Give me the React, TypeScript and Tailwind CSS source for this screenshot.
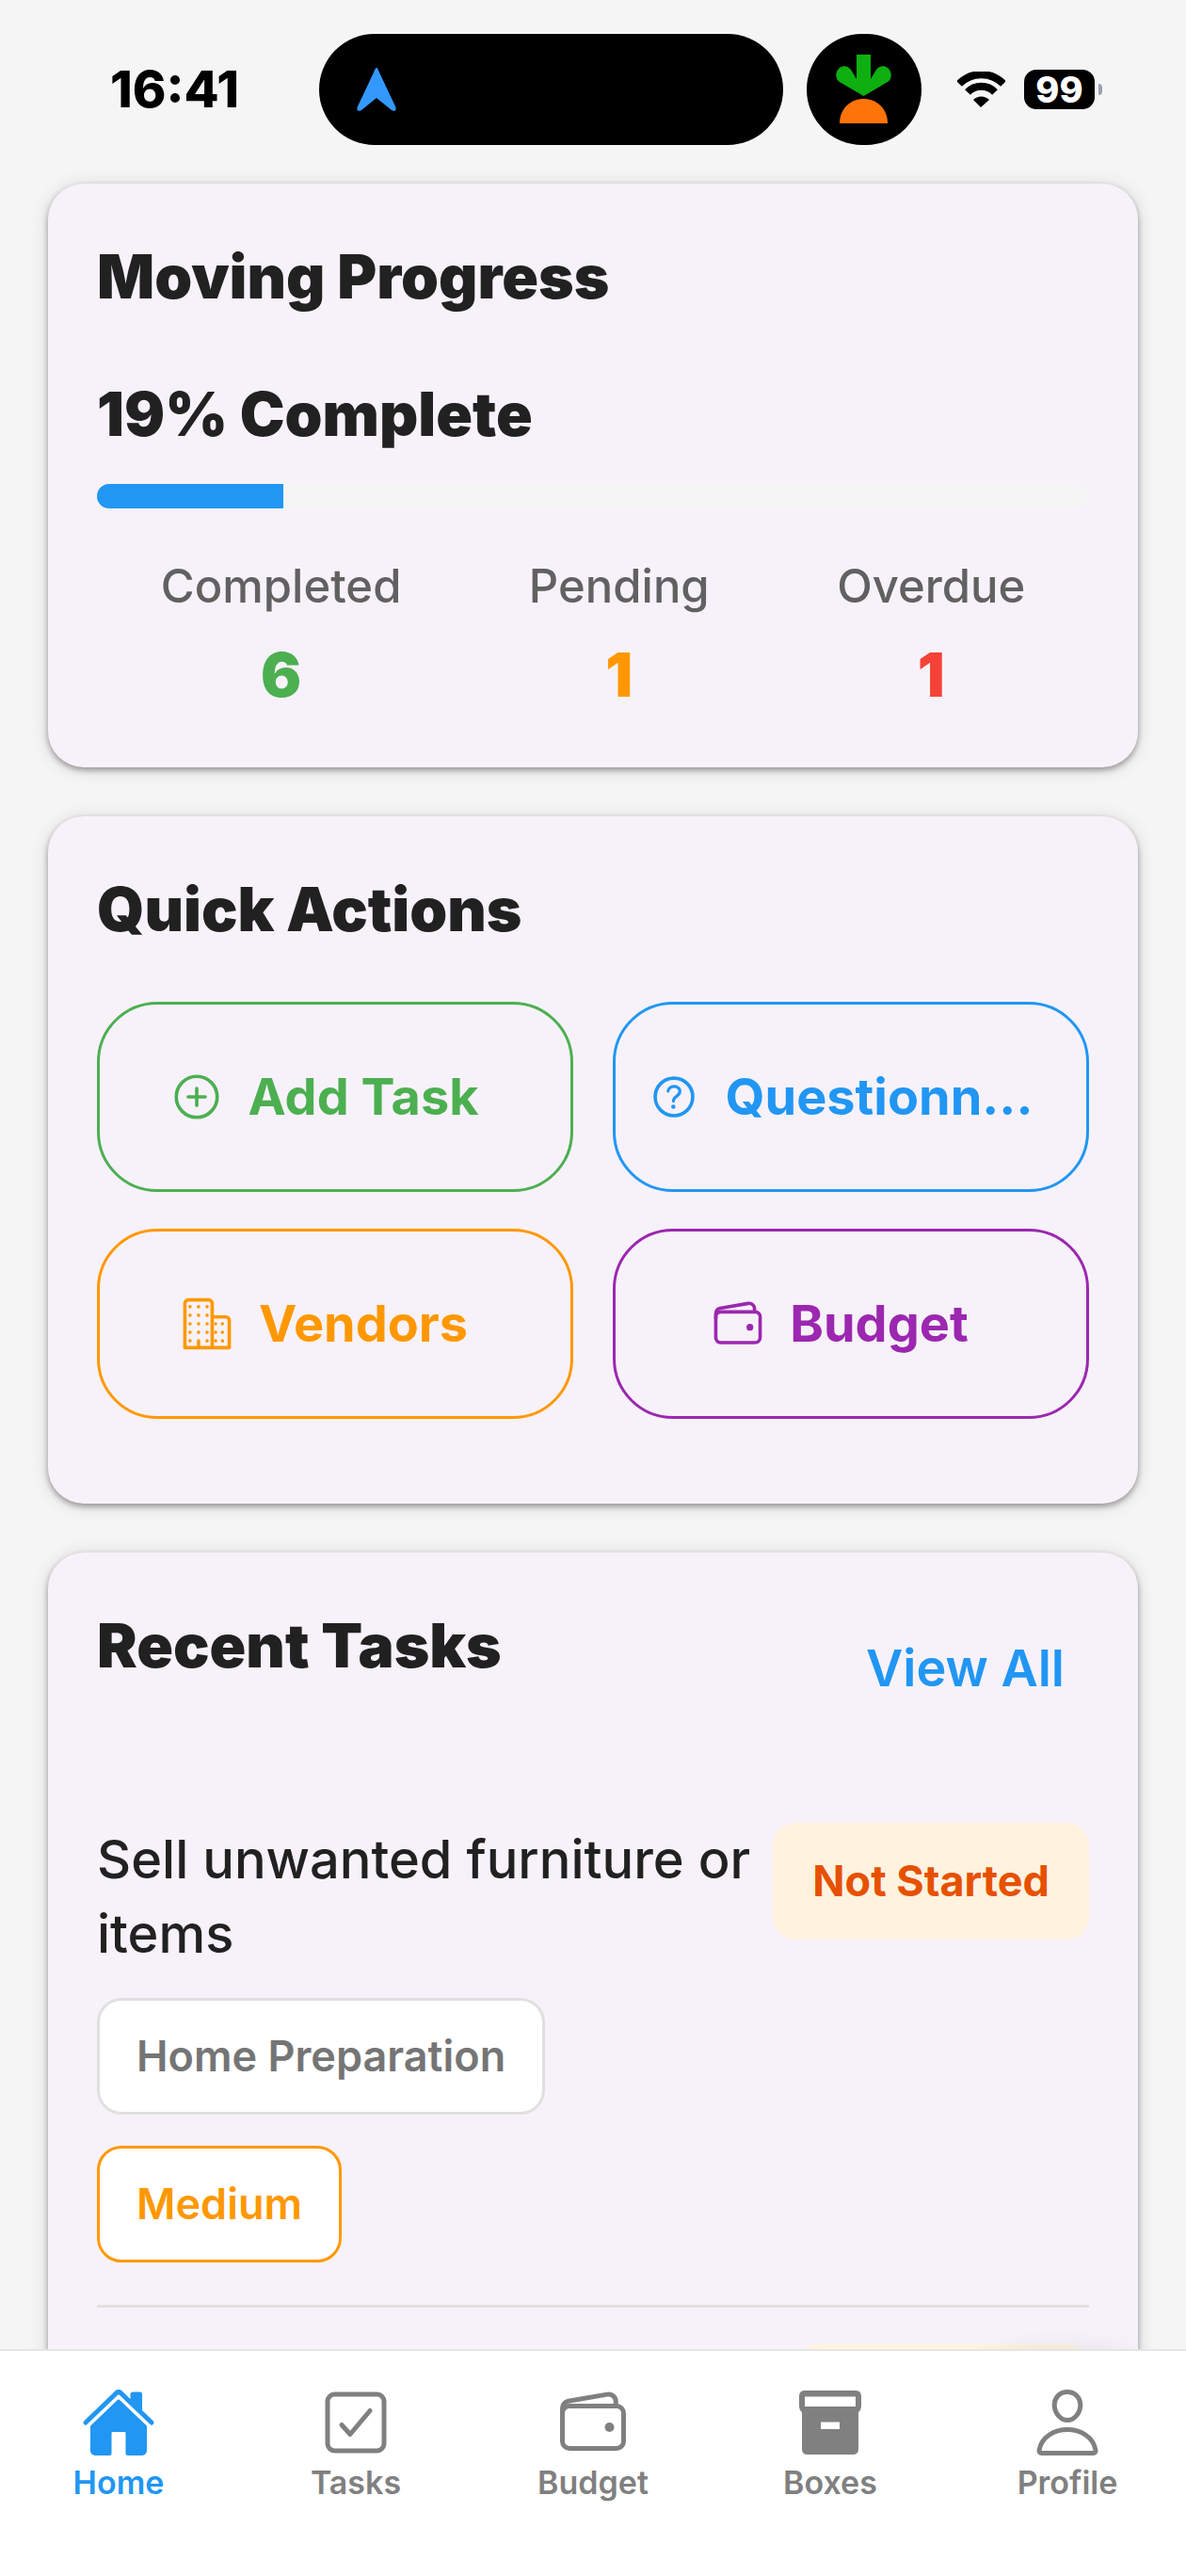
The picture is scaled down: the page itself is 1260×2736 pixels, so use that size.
import React from 'react';
import {
  IoAddCircleOutline,
  IoBusinessOutline,
  IoCheckboxOutline,
  IoHelpCircleOutline,
  IoHome,
  IoPersonOutline,
  IoWalletOutline,
} from 'react-icons/io5';

interface QuickAction {
  label: string;
  icon: React.ReactNode;
  className: string;
}

interface TabItem {
  label: string;
  icon: React.ReactNode;
  active?: boolean;
}

const BoxIcon: React.FC = () => (
  <svg viewBox="0 0 80 80" className="size-20" fill="currentColor">
    <path
      fillRule="evenodd"
      d="M13 6H67Q73 6 73 12V22Q73 27 70 29V68Q70 74 64 74H16Q10 74 10 68V29Q7 27 7 22V12Q7 6 13 6ZM13 12.5V23H67V12.5ZM30 39.5V47H50V39.5Z"
    />
  </svg>
);

const stats = [
  { label: 'Completed', value: 6, className: 'text-[#4caf50]' },
  { label: 'Pending', value: 1, className: 'text-[#ff9800]' },
  { label: 'Overdue', value: 1, className: 'text-[#f44336]' },
];

const quickActions: QuickAction[] = [
  {
    label: 'Add Task',
    icon: <IoAddCircleOutline className="size-[58px] shrink-0" />,
    className: 'border-[#4caf50] text-[#4caf50]',
  },
  {
    label: 'Questionn...',
    icon: <IoHelpCircleOutline className="size-[58px] shrink-0" />,
    className: 'border-[#2196f3] text-[#2196f3]',
  },
  {
    label: 'Vendors',
    icon: <IoBusinessOutline className="size-[58px] shrink-0" />,
    className: 'border-[#ff9800] text-[#ff9800]',
  },
  {
    label: 'Budget',
    icon: <IoWalletOutline className="size-[58px] shrink-0" />,
    className: 'border-[#9c27b0] text-[#9c27b0]',
  },
];

const tabs: TabItem[] = [
  { label: 'Home', icon: <IoHome className="size-20" />, active: true },
  { label: 'Tasks', icon: <IoCheckboxOutline className="size-20" /> },
  { label: 'Budget', icon: <IoWalletOutline className="size-20" /> },
  { label: 'Boxes', icon: <BoxIcon /> },
  { label: 'Profile', icon: <IoPersonOutline className="size-20" /> },
];

const Card: React.FC<{ children: React.ReactNode; className?: string }> = ({ children, className = '' }) => (
  <section
    className={`rounded-[38px] bg-[#f7f2fa] px-[52px] shadow-[0_3px_6px_rgba(0,0,0,0.35),0_2px_20px_rgba(0,0,0,0.12)] ${className}`}
  >
    {children}
  </section>
);

const StatusBar: React.FC = () => (
  <header className="flex h-[190px] items-start pt-9">
    <div className="flex h-[118px] w-[339px] items-center pl-[117px] text-[54px] leading-[60px] font-extrabold text-black">
      16:41
    </div>
    <div className="flex h-[118px] w-[493px] items-center rounded-full bg-black pl-10">
      <svg viewBox="0 0 42 46" className="h-[46px] w-[42px]" fill="#3399ff">
        <path d="M21 0C22 0 23 2 24 5L41 41C43 45 40 47 37 45L21 32L5 45C2 47-1 45 1 41L18 5C19 2 20 0 21 0Z" />
      </svg>
    </div>
    <div className="ml-[25px] flex h-[118px] w-[122px] items-center justify-center rounded-full bg-black">
      <svg viewBox="0 0 60 74" className="h-[74px] w-[60px]">
        <path
          d="M22 0H37V26L43 16C46 12 51 11 55 14C60 18 60 26 55 29L29.500 44L4 29C-1 26-1 18 4 14C8 11 13 12 16 16L22 26Z"
          fill="#0eaf10"
        />
        <path d="M4 73C4 57 16 47 29.500 47S55 57 55 73Z" fill="#ff7409" />
      </svg>
    </div>
    <div className="flex h-[118px] items-center pl-[38px]">
      <svg viewBox="0 0 51 38" className="h-[38px] w-[51px]" fill="none" stroke="#000">
        <path d="M2 13a33 33 0 0 1 47 0" strokeWidth="8" />
        <path d="M11 22a20 20 0 0 1 29 0" strokeWidth="8" />
        <path d="M17 30a12 12 0 0 1 17 0L25 38Z" fill="#000" stroke="none" />
      </svg>
      <div className="ml-5 flex h-[42px] w-[75px] items-center justify-center rounded-[13px] bg-black text-[38px] leading-[42px] font-extrabold text-white">
        99
      </div>
      <div className="ml-1 h-3 w-1 rounded-r-full bg-gray-400" />
    </div>
  </header>
);

const App: React.FC = () => {
  return (
    <div className="relative flex h-screen flex-col overflow-hidden bg-[#f5f5f5] font-['Inter',sans-serif] text-[#212121]">
      <StatusBar />

      <main className="flex min-h-0 flex-1 flex-col gap-[52px] px-[51px] pt-[5px]">
        <Card className="shrink-0 pt-[57px] pb-14">
          <h1 className="text-[64px] leading-[84px] font-black">Moving Progress</h1>
          <h2 className="mt-[62px] text-[64px] leading-[84px] font-black">19% Complete</h2>
          <div className="mt-8 h-[26px] overflow-hidden rounded-full bg-[#f5f5f5]">
            <div className="h-full bg-[#2196f3]" style={{ width: `${(3 / 16) * 100}%` }} />
          </div>
          <dl className="mt-[49px] flex justify-around">
            {stats.map((stat) => (
              <div key={stat.label} className="flex flex-col items-center">
                <dt className="text-[49px] leading-[68px] font-medium text-[#616161]">{stat.label}</dt>
                <dd className={`mt-[18px] text-[64px] leading-[84px] font-black ${stat.className}`}>{stat.value}</dd>
              </div>
            ))}
          </dl>
        </Card>

        <Card className="shrink-0 pt-[57px] pb-[90px]">
          <h2 className="text-[64px] leading-[84px] font-black">Quick Actions</h2>
          <div className="mt-[56px] grid grid-cols-2 gap-x-[42px] gap-y-[39px]">
            {quickActions.map((action) => (
              <button
                key={action.label}
                type="button"
                className={`flex h-[202px] items-center justify-center gap-[26px] rounded-[64px] border-[3px] pr-[52px] pl-7 ${action.className}`}
              >
                {action.icon}
                <span className="text-[54px] leading-[80px] font-bold whitespace-nowrap">{action.label}</span>
              </button>
            ))}
          </div>
        </Card>

        <Card className="flex-1 pt-[57px]">
          <div className="flex items-start justify-between">
            <h2 className="text-[64px] leading-[84px] font-black">Recent Tasks</h2>
            <a href="#tasks" className="mt-6 mr-[26px] text-[54px] leading-[84px] font-semibold text-[#2196f3]">
              View All
            </a>
          </div>

          <article className="mt-[122px] border-b-[3px] border-[#e0e0e0] pb-[45px]">
            <div className="flex items-start justify-between">
              <h3 className="text-[56px] leading-[79px] font-medium">Sell unwanted furniture or items</h3>
              <span className="shrink-0 rounded-[24px] bg-[#fff3e0] px-[42px] py-[30px] text-[45px] leading-[64px] font-bold text-[#e65100]">
                Not Started
              </span>
            </div>
            <div className="mt-7 flex flex-col items-start gap-[33px]">
              <span className="rounded-[26px] border-[3px] border-[#e0e0e0] bg-white px-[39px] py-[27px] text-[45px] leading-[64px] font-semibold text-[#757575]">
                Home Preparation
              </span>
              <span className="rounded-[26px] border-[3px] border-[#ff9800] bg-white px-[39px] py-[27px] text-[45px] leading-[64px] font-semibold text-[#ff9800]">
                Medium
              </span>
            </div>
          </article>

          <div className="mt-[39px] flex justify-end">
            <span className="h-[124px] w-[312px] rounded-[24px] bg-[#fff3e0]" />
          </div>
        </Card>
      </main>

      {/* floating button, tucked under the tab bar */}
      <div className="absolute right-12 bottom-[56px] size-[168px] rounded-[48px] shadow-[0_0_36px_rgba(0,0,0,0.25)]" />

      <nav className="z-10 flex h-[241px] shrink-0 border-t-2 border-[#e5e5e5] bg-white">
        {tabs.map((tab) => (
          <a
            key={tab.label}
            href={`#${tab.label.toLowerCase()}`}
            className={`flex flex-1 flex-col items-center pt-9 ${tab.active ? 'text-[#2196f3]' : 'text-[#808080]'}`}
          >
            {tab.icon}
            <span className="text-[34px] leading-[48px] font-semibold">{tab.label}</span>
          </a>
        ))}
      </nav>
    </div>
  );
};

export default App;
